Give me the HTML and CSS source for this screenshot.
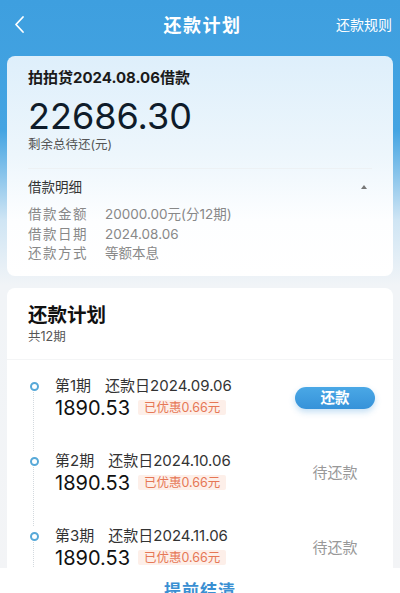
FILE: index.html
```html
<!DOCTYPE html>
<html lang="zh-CN">
<head>
  <meta charset="UTF-8" />
  <title>还款计划</title>
  <link rel="stylesheet" href="styles.css">
</head>
<body>
  <div class="topbar">
    <div class="back">
      <svg width="13" height="19" viewBox="0 0 13 19">
        <polyline points="10,2 3,9.5 10,17" fill="none" stroke="#fff" stroke-width="1.8" stroke-linecap="round" stroke-linejoin="round" />
      </svg>
    </div>
    <div class="title">还款计划</div>
    <div class="rule">还款规则</div>
  </div>

  <div class="card loan">
    <div class="loan-name">拍拍贷2024.08.06借款</div>
    <div class="loan-amount">22686.30</div>
    <div class="loan-sub">剩余总待还(元)</div>
    <div class="detail-head">
      <span>借款明细</span>
      <i class="caret"></i>
    </div>
    <div class="detail-row"><span class="label">借款金额</span><span>20000.00元(分12期)</span></div>
    <div class="detail-row"><span class="label">借款日期</span><span>2024.08.06</span></div>
    <div class="detail-row"><span class="label">还款方式</span><span>等额本息</span></div>
  </div>

  <div class="card plan">
    <div class="plan-head">
      <div class="plan-title">还款计划</div>
      <div class="plan-sub">共12期</div>
    </div>
    <div class="plan-list" id="planList"></div>
  </div>

  <div class="bottombar">提前结清</div>

  <script>
    const periods = [
      { no: 1, date: "2024.09.06", amount: "1890.53", off: "0.66", due: true },
      { no: 2, date: "2024.10.06", amount: "1890.53", off: "0.66" },
      { no: 3, date: "2024.11.06", amount: "1890.53", off: "0.66" },
      { no: 4, date: "2024.12.06", amount: "1890.53", off: "0.66" },
    ];
    const list = document.getElementById("planList");
    periods.forEach((p) => {
      const row = document.createElement("div");
      row.className = "plan-item";
      row.innerHTML = `
        <div class="dot"></div>
        <div class="info">
          <div class="line1"><span class="no">第${p.no}期</span>还款日${p.date}</div>
          <div class="line2"><span class="money">${p.amount}</span><span class="tag">已优惠${p.off}元</span></div>
        </div>
        <div class="action">
          ${p.due ? '<button class="pay">还款</button>' : '<span class="wait">待还款</span>'}
        </div>
      `;
      list.appendChild(row);
    });
  </script>
</body>
</html>
```

FILE: styles.css
```css
body {
  margin: 0;
  width: 400px;
  height: 593px;
  overflow: hidden;
  font-family: Inter, "Noto Sans CJK SC", sans-serif;
  background: linear-gradient(180deg, #3e9fdf 0, #44a4e2 130px, #cfe5f4 220px, #f1f4f7 285px, #f3f4f6 100%);
}
.topbar {
  height: 48px;
  display: grid;
  grid-template-columns: 70px 1fr 70px;
  align-items: center;
  padding: 0 8px 0 13px;
  color: #fff;
}
.back {
  display: flex;
}
.title {
  text-align: center;
  font-size: 18px;
  font-weight: 700;
  letter-spacing: 1.5px;
}
.rule {
  text-align: right;
  font-size: 14px;
}
.card {
  margin: 8px 7px 0;
  border-radius: 8px;
  background: #fff;
}
.loan {
  padding: 12px 21px 12px 21px;
  background: linear-gradient(180deg, #deeffb 0, #edf6fc 45%, #fdfeff 75%, #fff 100%);
}
.loan-name {
  font-size: 15px;
  line-height: 20px;
  font-weight: 700;
  color: #1a1a1a;
}
.loan-amount {
  margin-top: 10px;
  font-size: 36px;
  line-height: 36px;
  font-weight: 400;
  color: #0f1c2a;
}
.loan-sub {
  margin-top: 2px;
  font-size: 12.5px;
  line-height: 18px;
  color: #555;
}
.detail-head {
  margin-top: 14px;
  padding-top: 8px;
  border-top: 1px solid #edf1f4;
  display: flex;
  justify-content: space-between;
  align-items: center;
  font-size: 13.5px;
  line-height: 20px;
  color: #333;
}
.caret {
  width: 0;
  height: 0;
  margin-right: 5px;
  border-left: 3px solid transparent;
  border-right: 3px solid transparent;
  border-bottom: 4px solid #777;
}
.detail-head + .detail-row {
  margin-top: 8px;
}
.detail-row {
  display: flex;
  font-size: 13.5px;
  line-height: 19.5px;
  color: #888;
}
.detail-row .label {
  width: 77px;
  letter-spacing: 1.5px;
}
.plan {
  margin-top: 12px;
  height: 400px;
}
.plan-head {
  padding: 14px 21px 13px;
  border-bottom: 1px solid #f4f5f6;
}
.plan-title {
  font-size: 19.5px;
  line-height: 26px;
  font-weight: 700;
  color: #111;
}
.plan-sub {
  font-size: 12.5px;
  line-height: 18px;
  color: #555;
}
.plan-list {
  padding: 16px 18px 0 23px;
}
.plan-item {
  position: relative;
  display: flex;
  align-items: center;
  height: 44px;
  padding-bottom: 31px;
}
.plan-item::after {
  content: "";
  position: absolute;
  left: 3px;
  top: 16px;
  bottom: 0;
  border-left: 1.5px dotted #d3d9de;
}
.dot {
  position: absolute;
  left: 0;
  top: 6px;
  width: 5px;
  height: 5px;
  border: 2px solid #58a9d8;
  border-radius: 50%;
}
.info {
  flex: 1;
  padding-left: 25px;
}
.line1 {
  font-size: 15px;
  line-height: 20px;
  color: #333;
}
.line1 .no {
  margin-right: 14px;
}
.line2 {
  display: flex;
  align-items: center;
  height: 24px;
}
.money {
  font-size: 20px;
  color: #111;
}
.tag {
  margin-left: 8px;
  padding: 0 6px;
  font-size: 12.5px;
  line-height: 15px;
  color: #e67755;
  background: #fdefe9;
  border-radius: 2px;
}
.action {
  width: 80px;
  display: flex;
  justify-content: center;
  align-items: center;
}
.pay {
  width: 80px;
  height: 22px;
  padding: 0;
  border: none;
  border-radius: 11px;
  background: linear-gradient(180deg, #4aa8e6, #3692d9);
  color: #fff;
  font-family: inherit;
  font-size: 14.5px;
  line-height: 22px;
  font-weight: 700;
  box-shadow: 0 3px 6px rgb(60 150 220 / 0.3);
}
.wait {
  font-size: 15px;
  line-height: 20px;
  color: #999;
}
.bottombar {
  position: fixed;
  left: 0;
  right: 0;
  top: 568px;
  height: 50px;
  padding-top: 9px;
  box-sizing: border-box;
  background: #fff;
  text-align: center;
  font-size: 17px;
  font-weight: 700;
  letter-spacing: 1px;
  color: #3a8fd2;
}
```
